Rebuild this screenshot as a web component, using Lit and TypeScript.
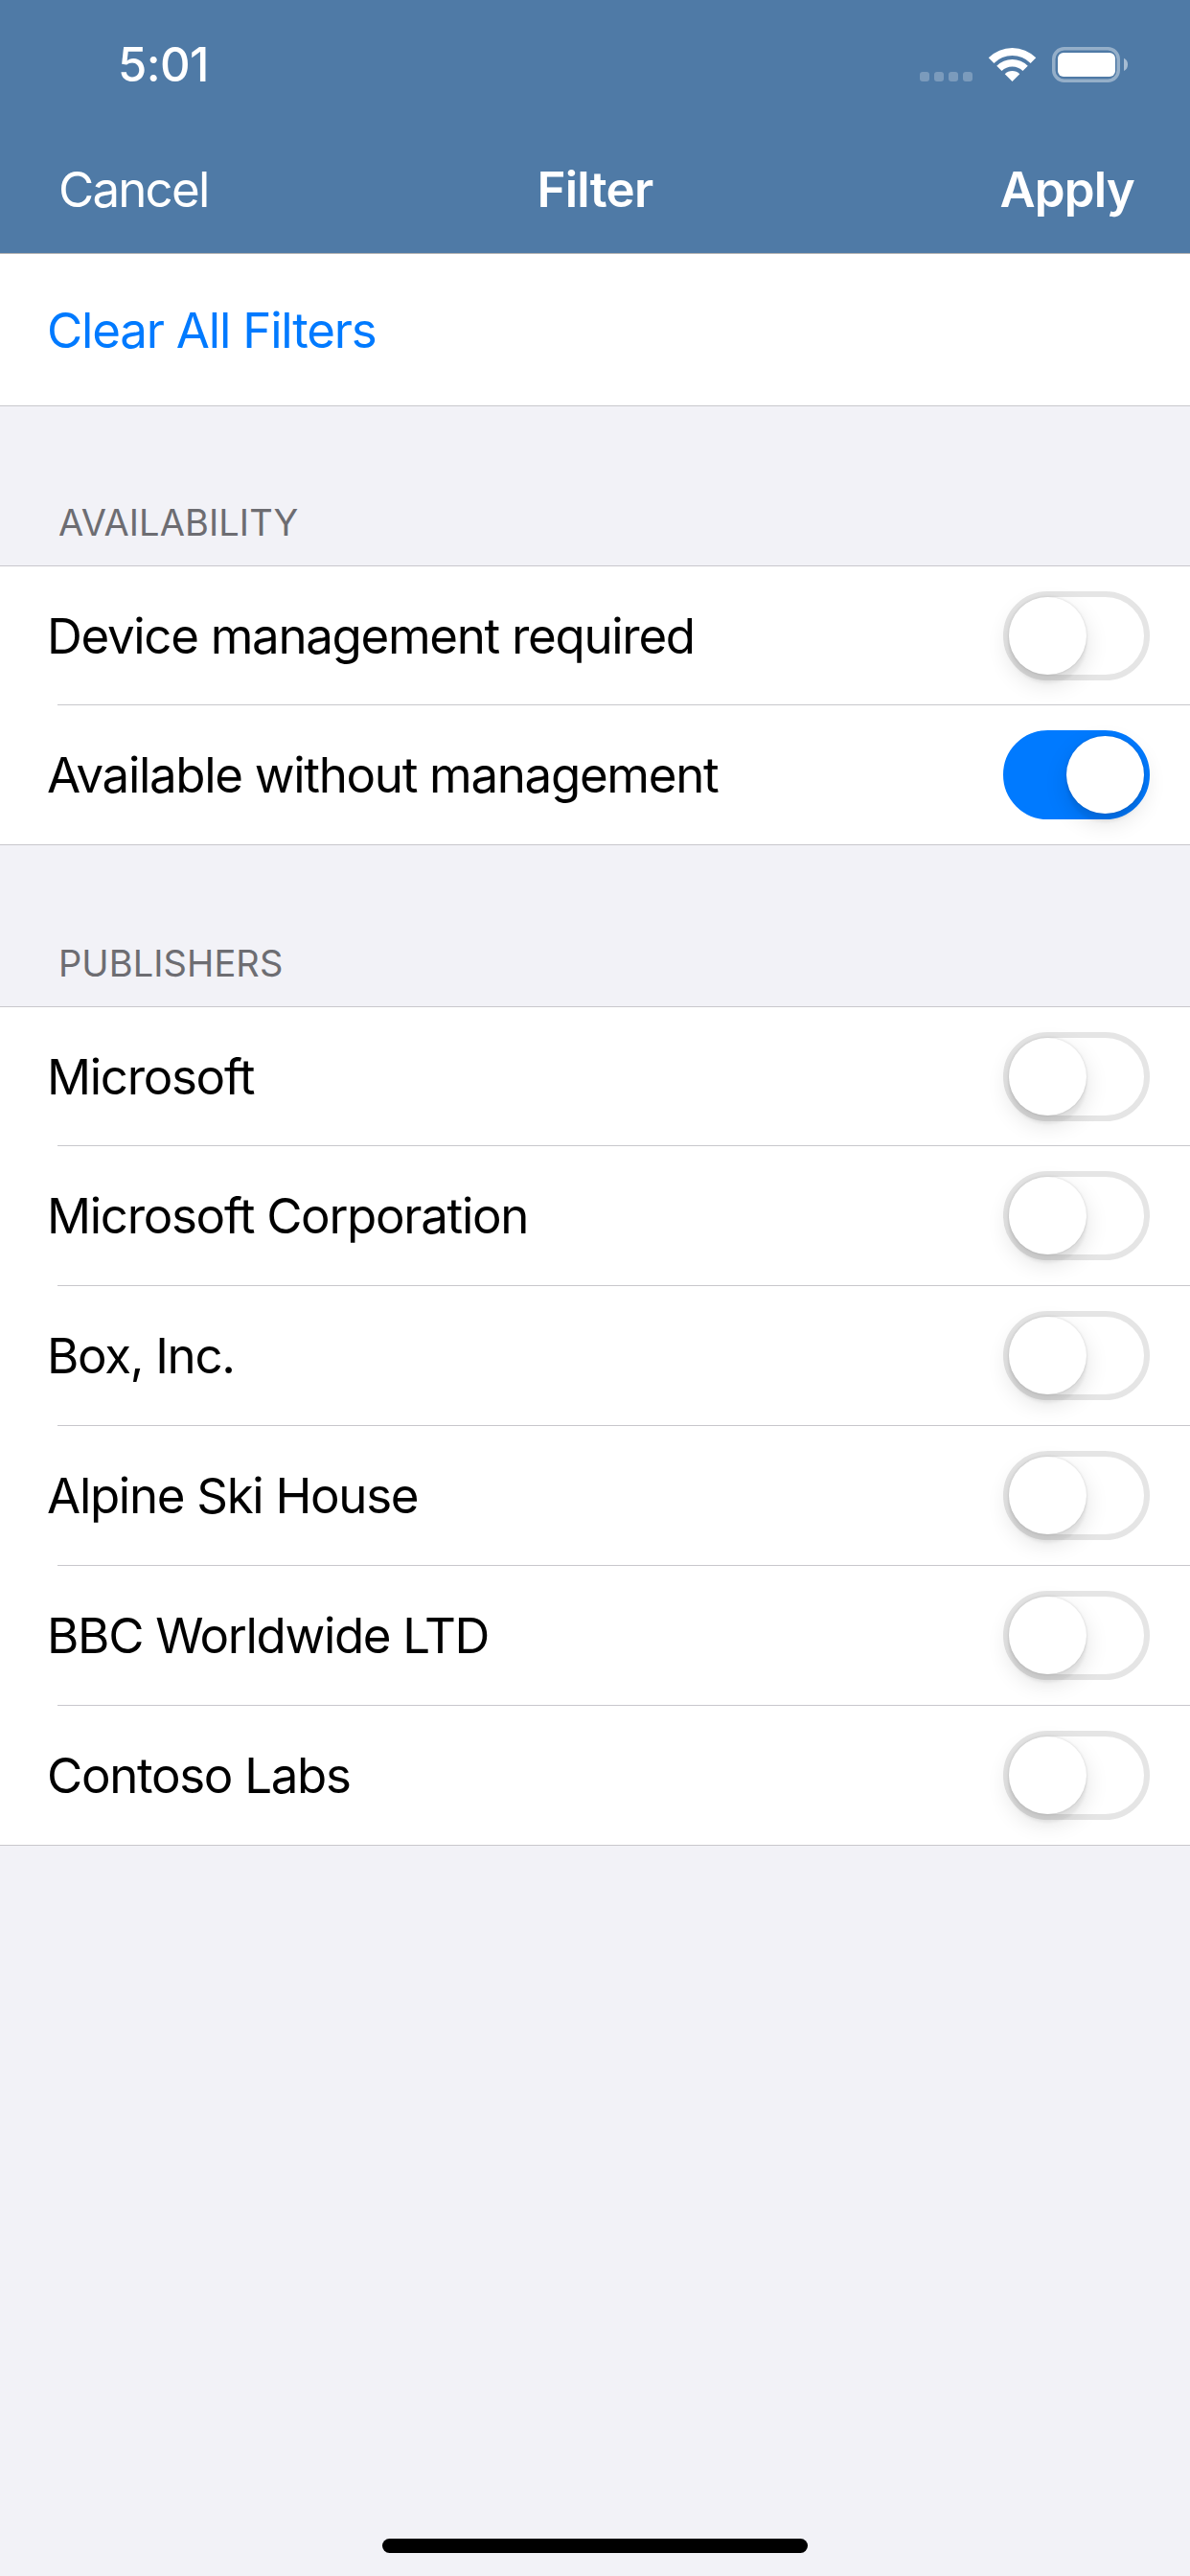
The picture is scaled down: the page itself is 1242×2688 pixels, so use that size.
import { LitElement, html, css } from "lit";
import { customElement } from "lit/decorators.js";

const sections = [
  { title: "AVAILABILITY", rows: [["Device management required", false], ["Available without management", true]] },
  { title: "PUBLISHERS", rows: [["Microsoft", false], ["Microsoft Corporation", false], ["Box, Inc.", false], ["Alpine Ski House", false], ["BBC Worldwide LTD", false], ["Contoso Labs", false]] },
] as { title: string; rows: [string, boolean][] }[];

@customElement("app-root")
export class AppRoot extends LitElement {
  static styles = css`
    :host { display: block; width: 1242px; height: 2688px; background: #f2f2f7; font-family: Inter, "Liberation Sans", sans-serif; position: relative; overflow: hidden; color: #000; }
    * { box-sizing: border-box; }
    .top { background: #4f7aa6; height: 265px; border-bottom: 1px solid #b2b2b2; color: #fff; display: flex; flex-direction: column; }
    .status { height: 132px; display: flex; align-items: flex-start; padding: 0 0 0 123px; }
    .time { font-size: 49px; font-weight: 500; line-height: 56px; margin-top: 40px; letter-spacing: -0.6px; }
    .icons { margin-left: auto; margin-right: 64px; margin-top: 46px; display: block; }
    .nav { height: 132px; display: grid; grid-template-columns: 1fr auto 1fr; align-items: center; padding: 0 61px; font-size: 51px; line-height: 60px; }
    .nav .c { font-weight: 400; letter-spacing: -1.8px; }
    .nav .t { font-weight: 600; text-align: center; letter-spacing: -0.7px; }
    .nav .a { font-weight: 600; text-align: right; letter-spacing: -0.8px; margin-right: -3px; }
    .clear { height: 159px; background: #fff; border-bottom: 1px solid #c8c7cc; display: flex; align-items: center; padding-left: 49px; color: #007aff; font-size: 51px; letter-spacing: -1.2px; }
    .head { height: 166px; display: flex; align-items: flex-end; padding: 0 0 22px 61px; font-size: 38px; line-height: 46px; color: #6d6d72; letter-spacing: 0.1px; }
    .group + .head { height: 168px; }
    .group { background: #fff; border-top: 1px solid #c8c7cc; border-bottom: 1px solid #c8c7cc; }
    .row { height: 144px; display: flex; align-items: center; padding: 0 42px 0 49px; font-size: 51px; letter-spacing: -1.3px; }
    .row + .row { height: 146px; border-top: 1px solid #c8c7cc; margin-left: 60px; padding-left: 0; }
    .row + .row .label { margin-left: -11px; }
    .label { flex: 1; }
    .sw { width: 153px; height: 93px; border-radius: 47px; border: 6px solid #e5e5e5; background: #fff; position: relative; flex: none; }
    .sw.on { background: #007aff; border-color: #007aff; }
    .knob { position: absolute; left: 0; top: 0; width: 81px; height: 81px; border-radius: 50%; background: #fff; box-shadow: 0 9px 24px rgba(0,0,0,.12), 0 9px 3px rgba(0,0,0,.05), 0 0 3px rgba(0,0,0,.15); }
    .sw.on .knob { left: 60px; }
    .home { position: absolute; left: 399px; bottom: 24px; width: 444px; height: 15px; border-radius: 8px; background: #000; }
  `;

  render() {
    return html`
      <div class="top">
        <div class="status">
          <span class="time">5:01</span>
          <svg class="icons" width="218" height="42" viewBox="0 0 218 42" aria-hidden="true">
            <g fill="#fff" fill-opacity=".25">
              <rect x="0" y="29" width="10" height="10" rx="3"/><rect x="15" y="29" width="10" height="10" rx="3"/><rect x="30" y="29" width="10" height="10" rx="3"/><rect x="45" y="29" width="10" height="10" rx="3"/>
            </g>
            <g fill="#fff">
              <path d="M71.75 14.25A35 35 0 0 1 121.25 14.25L115.6 19.9A27 27 0 0 0 77.4 19.9Z"/>
              <path d="M80.24 22.74A23 23 0 0 1 112.76 22.74L107.46 28.04A15.5 15.5 0 0 0 85.54 28.04Z"/>
              <path d="M88.72 31.22A11 11 0 0 1 104.28 31.22L96.5 39Z"/>
            </g>
            <rect x="139.75" y="4.75" width="67.5" height="33.5" rx="11" fill="none" stroke="#fff" stroke-opacity=".4" stroke-width="3.5"/>
            <rect x="144" y="9" width="60" height="25" rx="6" fill="#fff"/>
            <path d="M213 14.700C216 16 217 18.500 217 21.300C217 24.200 216 26.700 213 28Z" fill="#fff" fill-opacity=".5"/>
          </svg>
        </div>
        <div class="nav"><span class="c">Cancel</span><span class="t">Filter</span><span class="a">Apply</span></div>
      </div>
      <div class="clear">Clear All Filters</div>
      ${sections.map((s) => html`
        <div class="head">${s.title}</div>
        <div class="group">
          ${s.rows.map(([l, on]) => html`<div class="row"><span class="label">${l}</span><span class="sw ${on ? "on" : ""}"><span class="knob"></span></span></div>`)}
        </div>`)}
      <div class="home"></div>
    `;
  }
}
